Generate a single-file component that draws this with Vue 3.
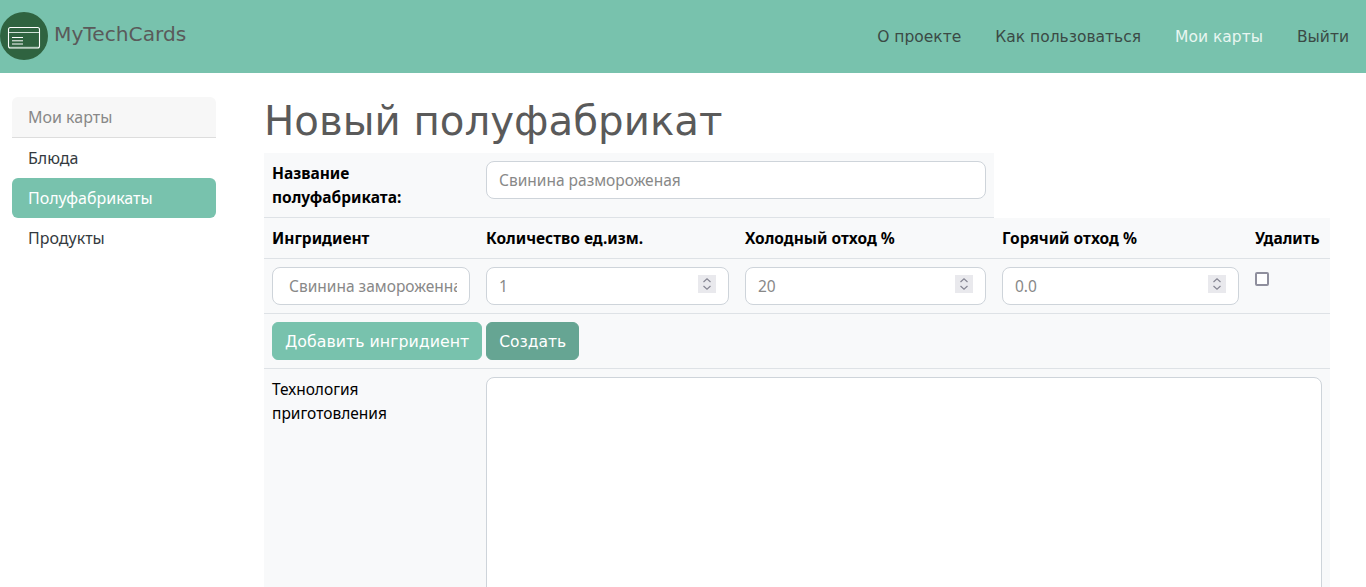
<template>
  <div class="page">
    <nav class="navbar">
      <a class="brand" href="#">
        <svg class="logo" width="48" height="48" viewBox="0 0 48 48">
          <circle cx="24" cy="24" r="24" fill="#2f6340" />
          <rect x="8.5" y="15.5" width="31" height="20.5" rx="2" fill="#2f6340" stroke="#fff" stroke-width="1.1" />
          <path d="M9 20.5h30" stroke="#cfe0d6" stroke-width="1" />
          <path d="M12 25.5h11M12 28.8h11M12 32h11" stroke="#fff" stroke-width="1" />
          <path d="M10 35.4h28" stroke="#b9cfc2" stroke-width="1.2" />
        </svg>
        <span>MyTechCards</span>
      </a>
      <ul class="nav-links">
        <li v-for="link in links" :key="link.label">
          <a href="#" :class="{ active: link.active }">{{ link.label }}</a>
        </li>
      </ul>
    </nav>

    <div class="content">
      <aside class="sidebar">
        <div class="side-head">Мои карты</div>
        <a
          v-for="item in sideItems"
          :key="item"
          href="#"
          class="side-item"
          :class="{ active: item === 'Полуфабрикаты' }"
        >{{ item }}</a>
      </aside>

      <main class="main">
        <h1>Новый полуфабрикат</h1>

        <table class="name-table">
          <colgroup>
            <col class="c1" />
            <col class="c-name" />
          </colgroup>
          <tbody>
            <tr>
              <th>Название полуфабриката:</th>
              <td><input type="text" placeholder="Свинина размороженая" /></td>
            </tr>
          </tbody>
        </table>

        <table class="items-table">
          <colgroup>
            <col class="c1" />
            <col class="c2" />
            <col class="c3" />
            <col class="c4" />
            <col class="c5" />
          </colgroup>
          <thead>
            <tr>
              <th v-for="col in columns" :key="col">{{ col }}</th>
            </tr>
          </thead>
          <tbody>
            <tr>
              <td><input class="ingredient" type="text" placeholder="Свинина замороженная" /></td>
              <td><input type="number" placeholder="1" /></td>
              <td><input type="number" placeholder="20" /></td>
              <td><input type="number" placeholder="0.0" /></td>
              <td><input class="check" type="checkbox" /></td>
            </tr>
            <tr>
              <td colspan="5" class="actions">
                <button class="btn add">Добавить ингридиент</button>
                <button class="btn dark">Создать</button>
              </td>
            </tr>
            <tr>
              <td>Технология приготовления</td>
              <td colspan="4"><textarea></textarea></td>
            </tr>
          </tbody>
        </table>
      </main>
    </div>
  </div>
</template>

<script setup>
const links = [
  { label: 'О проекте' },
  { label: 'Как пользоваться' },
  { label: 'Мои карты', active: true },
  { label: 'Выйти' }
];

const sideItems = ['Блюда', 'Полуфабрикаты', 'Продукты'];

const columns = ['Ингридиент', 'Количество ед.изм.', 'Холодный отход %', 'Горячий отход %', 'Удалить'];
</script>

<style>
body {
  margin: 0;
}
</style>

<style scoped>
.page {
  height: 100vh;
  overflow: hidden;
  font-family: "Noto Sans", sans-serif;
  font-size: 16px;
  line-height: 24px;
  color: #000;
  background: #fff;
}

a {
  text-decoration: none;
}

.navbar {
  height: 73px;
  background: #78c2ad;
  display: flex;
  align-items: center;
  justify-content: space-between;
  font-family: "DejaVu Sans", sans-serif;
}

.brand {
  display: flex;
  align-items: center;
  gap: 6px;
  font-size: 20.2px;
  color: #5a5a5a;
  margin-top: -1px;
}

.logo {
  display: block;
}

.brand span {
  margin-top: -5px;
}

.nav-links {
  display: flex;
  gap: 2px;
  list-style: none;
  margin: 1px 1px 0 0;
  padding: 0;
}

.nav-links a {
  display: block;
  padding: 8px 16px;
  font-size: 15.5px;
  color: #3b4a45;
}

.nav-links a.active {
  color: #e8f6f1;
}

.content {
  display: flex;
  align-items: flex-start;
  padding: 24px 36px 0 12px;
  gap: 48px;
}

.sidebar {
  width: 204px;
  flex: none;
}

.side-head {
  height: 41px;
  padding: 8px 16px;
  box-sizing: border-box;
  background: #f7f7f7;
  color: #888;
  border-bottom: 1px solid #ddd;
  border-radius: 6px 6px 0 0;
}

.side-item {
  display: block;
  height: 40px;
  padding: 8px 16px;
  box-sizing: border-box;
  color: #343a40;
  border-radius: 6px;
}

.side-item.active {
  background: #78c2ad;
  color: #fff;
}

.main {
  flex: 1;
  min-width: 0;
}

h1 {
  margin: 0;
  height: 56px;
  box-sizing: border-box;
  padding-top: 1px;
  font-family: "DejaVu Sans", sans-serif;
  font-weight: 400;
  font-size: 40.3px;
  line-height: 48px;
  color: #5a5a5a;
}

table {
  border-collapse: collapse;
  table-layout: fixed;
  background: #f8f9fa;
}

.name-table {
  width: 730px;
}

.items-table {
  width: 1066px;
}

.c1 { width: 214px; }
.c2 { width: 259px; }
.c3 { width: 257px; }
.c4 { width: 253px; }
.c5 { width: 83px; }
.c-name { width: 516px; }

th,
td {
  padding: 8px;
  text-align: left;
  vertical-align: top;
  border-bottom: 1px solid #dee2e6;
  font-size: 15.5px;
}

th {
  font-weight: 700;
}

input[type="text"],
input[type="number"],
textarea {
  display: block;
  width: 100%;
  height: 38px;
  box-sizing: border-box;
  padding: 6px 12px;
  font: inherit;
  line-height: 24px;
  background: #fff;
  border: 1px solid #ced4da;
  border-radius: 8px;
  color: #888;
  outline: none;
}

input::placeholder {
  color: #888;
}

input[type="number"]::-webkit-inner-spin-button {
  -webkit-appearance: none;
  appearance: none;
  opacity: 1;
  width: 18px;
  height: 18px;
  margin: 0;
  background: #e9e9ed url("data:image/svg+xml,%3Csvg xmlns='http://www.w3.org/2000/svg' width='18' height='18'%3E%3Cpath d='M5.5 7 9 3.8 12.500 7M5.500 11 9 14.200 12.500 11' fill='none' stroke='%23858592' stroke-width='1.200'/%3E%3C/svg%3E") center no-repeat;
}

input.ingredient {
  padding-left: 16px;
}

.check {
  display: block;
  -webkit-appearance: none;
  appearance: none;
  width: 14px;
  height: 14px;
  box-sizing: border-box;
  margin: 5px 0 0;
  background: #fff;
  border: 2px solid #8f8f9d;
  border-radius: 2px;
}

.actions {
  font-size: 0;
}

.btn {
  height: 38px;
  padding: 1px 12px 0;
  margin-right: 4px;
  vertical-align: top;
  border: 1px solid #78c2ad;
  border-radius: 6px;
  background: #78c2ad;
  color: #fff;
  font-family: "DejaVu Sans", sans-serif;
  font-size: 15.8px;
  cursor: pointer;
}

.btn.dark {
  font-size: 15.5px;
  background: #66a593;
  border-color: #66a593;
}

textarea {
  height: 400px;
  resize: none;
}
</style>
